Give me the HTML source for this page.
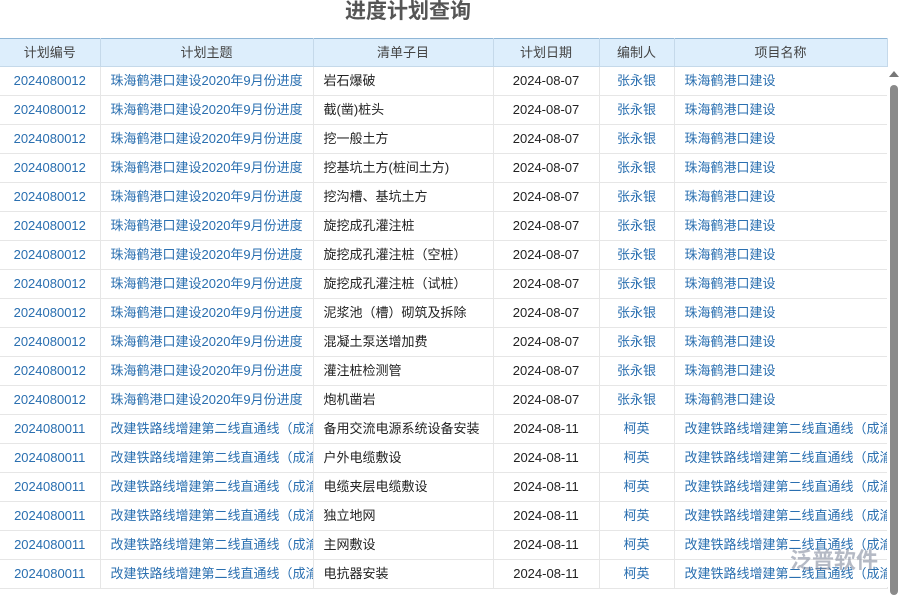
<!DOCTYPE html><html><head><meta charset="utf-8"><style>
body{margin:0;width:900px;height:587px;overflow:hidden;background:#fff;font-family:"Liberation Sans","Noto Sans CJK SC",sans-serif;font-size:13px}
.t{position:absolute;left:0;top:-1px;width:816px;text-align:center;font-size:21px;font-weight:bold;color:#555;line-height:26px}
table{position:absolute;left:0;top:38px;border-collapse:collapse;table-layout:fixed;width:887px}
th{background:#ddeefc;color:#444;font-weight:normal;height:27px;line-height:27px;padding:0;border-top:1px solid #8fb6d6;border-right:1px solid #c5d9ea;border-bottom:1px solid #c5d9ea}
td{height:28px;line-height:28px;border-bottom:1px solid #e6e6e6;border-right:1px solid #e6e6e6;color:#2a6fb0;white-space:nowrap;overflow:hidden;padding:0 10px;vertical-align:middle}
td span{display:inline-block;vertical-align:top}
td.c{text-align:center;padding:0}td.k{color:#222}
.sb{position:absolute;left:887px;top:67px;width:13px;height:520px;background:#fff}
.th{position:absolute;left:890px;top:85px;width:8px;height:510px;background:#8a8a8a;border-radius:4px}
.ar{position:absolute;left:889px;top:71px;border:5px solid transparent;border-bottom:6px solid #777;border-top:0}
.wm{position:absolute;left:790px;top:543px;font-size:22px;color:rgba(120,130,150,.55);font-weight:bold}
</style></head><body>
<div class="t">进度计划查询</div>
<table><colgroup><col width="100"><col width="213"><col width="180"><col width="106"><col width="75"><col width="213"></colgroup>
<tr><th>计划编号</th><th>计划主题</th><th>清单子目</th><th>计划日期</th><th>编制人</th><th>项目名称</th></tr>
<tbody>
<tr><td class="c">2024080012</td><td>珠海鹤港口建设2020年9月份进度</td><td class="k">岩石爆破</td><td class="c k">2024-08-07</td><td class="c">张永银</td><td>珠海鹤港口建设</td></tr>
<tr><td class="c">2024080012</td><td>珠海鹤港口建设2020年9月份进度</td><td class="k">截(凿)桩头</td><td class="c k">2024-08-07</td><td class="c">张永银</td><td>珠海鹤港口建设</td></tr>
<tr><td class="c">2024080012</td><td>珠海鹤港口建设2020年9月份进度</td><td class="k">挖一般土方</td><td class="c k">2024-08-07</td><td class="c">张永银</td><td>珠海鹤港口建设</td></tr>
<tr><td class="c">2024080012</td><td>珠海鹤港口建设2020年9月份进度</td><td class="k">挖基坑土方(桩间土方)</td><td class="c k">2024-08-07</td><td class="c">张永银</td><td>珠海鹤港口建设</td></tr>
<tr><td class="c">2024080012</td><td>珠海鹤港口建设2020年9月份进度</td><td class="k">挖沟槽、基坑土方</td><td class="c k">2024-08-07</td><td class="c">张永银</td><td>珠海鹤港口建设</td></tr>
<tr><td class="c">2024080012</td><td>珠海鹤港口建设2020年9月份进度</td><td class="k">旋挖成孔灌注桩</td><td class="c k">2024-08-07</td><td class="c">张永银</td><td>珠海鹤港口建设</td></tr>
<tr><td class="c">2024080012</td><td>珠海鹤港口建设2020年9月份进度</td><td class="k">旋挖成孔灌注桩（空桩）</td><td class="c k">2024-08-07</td><td class="c">张永银</td><td>珠海鹤港口建设</td></tr>
<tr><td class="c">2024080012</td><td>珠海鹤港口建设2020年9月份进度</td><td class="k">旋挖成孔灌注桩（试桩）</td><td class="c k">2024-08-07</td><td class="c">张永银</td><td>珠海鹤港口建设</td></tr>
<tr><td class="c">2024080012</td><td>珠海鹤港口建设2020年9月份进度</td><td class="k">泥浆池（槽）砌筑及拆除</td><td class="c k">2024-08-07</td><td class="c">张永银</td><td>珠海鹤港口建设</td></tr>
<tr><td class="c">2024080012</td><td>珠海鹤港口建设2020年9月份进度</td><td class="k">混凝土泵送增加费</td><td class="c k">2024-08-07</td><td class="c">张永银</td><td>珠海鹤港口建设</td></tr>
<tr><td class="c">2024080012</td><td>珠海鹤港口建设2020年9月份进度</td><td class="k">灌注桩检测管</td><td class="c k">2024-08-07</td><td class="c">张永银</td><td>珠海鹤港口建设</td></tr>
<tr><td class="c">2024080012</td><td>珠海鹤港口建设2020年9月份进度</td><td class="k">炮机凿岩</td><td class="c k">2024-08-07</td><td class="c">张永银</td><td>珠海鹤港口建设</td></tr>
<tr><td class="c">2024080011</td><td>改建铁路线增建第二线直通线（成渝</td><td class="k">备用交流电源系统设备安装</td><td class="c k">2024-08-11</td><td class="c">柯英</td><td>改建铁路线增建第二线直通线（成渝</td></tr>
<tr><td class="c">2024080011</td><td>改建铁路线增建第二线直通线（成渝</td><td class="k">户外电缆敷设</td><td class="c k">2024-08-11</td><td class="c">柯英</td><td>改建铁路线增建第二线直通线（成渝</td></tr>
<tr><td class="c">2024080011</td><td>改建铁路线增建第二线直通线（成渝</td><td class="k">电缆夹层电缆敷设</td><td class="c k">2024-08-11</td><td class="c">柯英</td><td>改建铁路线增建第二线直通线（成渝</td></tr>
<tr><td class="c">2024080011</td><td>改建铁路线增建第二线直通线（成渝</td><td class="k">独立地网</td><td class="c k">2024-08-11</td><td class="c">柯英</td><td>改建铁路线增建第二线直通线（成渝</td></tr>
<tr><td class="c">2024080011</td><td>改建铁路线增建第二线直通线（成渝</td><td class="k">主网敷设</td><td class="c k">2024-08-11</td><td class="c">柯英</td><td>改建铁路线增建第二线直通线（成渝</td></tr>
<tr><td class="c">2024080011</td><td>改建铁路线增建第二线直通线（成渝</td><td class="k">电抗器安装</td><td class="c k">2024-08-11</td><td class="c">柯英</td><td>改建铁路线增建第二线直通线（成渝</td></tr>
</tbody></table>
<div class="sb"></div><div class="ar"></div><div class="th"></div>
<div class="wm">泛普软件</div>
</body></html>
